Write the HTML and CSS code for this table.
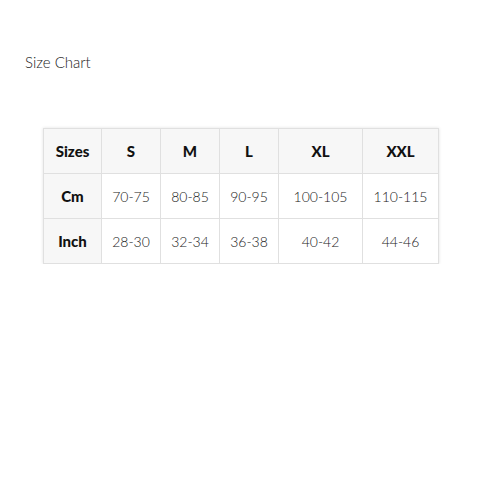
FILE: index.html
```html
<!DOCTYPE html>
<html>
<head>
<meta charset="utf-8">
<link rel="stylesheet" href="styles.css">
</head>
<body>
<div class="page">
  <h2 class="title">Size Chart</h2>
  <table class="chart">
    <colgroup>
      <col class="c1"><col class="c2"><col class="c3"><col class="c4"><col class="c5"><col class="c6">
    </colgroup>
    <tr class="head"><th>Sizes</th><th>S</th><th>M</th><th>L</th><th>XL</th><th>XXL</th></tr>
    <tr><th>Cm</th><td>70-75</td><td>80-85</td><td>90-95</td><td>100-105</td><td>110-115</td></tr>
    <tr><th>Inch</th><td>28-30</td><td>32-34</td><td>36-38</td><td>40-42</td><td>44-46</td></tr>
  </table>
</div>
</body>
</html>
```
FILE: styles.css
```css
html, body { margin: 0; padding: 0; background: #fff; }
body { font-family: "Lato", "DejaVu Sans", sans-serif; color: #333; }
.page { padding: 53px 0 0 25px; }
.title { margin: 0; font-size: 15px; font-weight: 300; line-height: 18px; color: #222; }
.chart {
  margin: 57px 0 0 18px;
  border-collapse: collapse;
  table-layout: fixed;
  width: 395px;
  box-shadow: 0 0 3px rgba(0,0,0,0.12);
}
.c1 { width: 58px; } .c2 { width: 59px; } .c3 { width: 59px; } .c4 { width: 59px; } .c5 { width: 84px; } .c6 { width: 76px; }
.chart th, .chart td {
  border: 1px solid #e0e0e0;
  height: 44px;
  padding: 0;
  text-align: center;
  font-size: 14px;
}
.chart th { font-size: 15px; font-weight: 900; color: #111; background: #f7f7f7; }
.chart td { font-weight: 300; color: #222; background: #fff; }
```
